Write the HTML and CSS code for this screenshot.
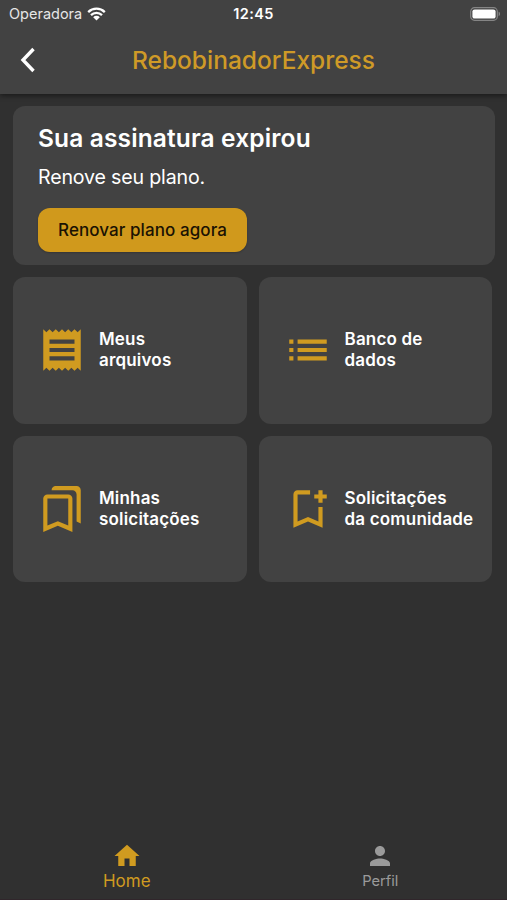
FILE: index.html
```html
<!DOCTYPE html>
<html lang="pt-BR">

<head>
  <meta charset="UTF-8">
  <meta name="viewport" content="width=device-width, initial-scale=1.0">
  <title>RebobinadorExpress</title>
  <link rel="stylesheet" href="styles.css">
</head>

<body>

  <header class="app-header">
    <!-- Phone status bar -->
    <div class="status-bar">
      <div class="carrier">
        <span>Operadora</span>
        <svg class="wifi" viewBox="0 0 19 14">
          <path d="M1.2 5.1a11.8 11.8 0 0 1 16.6 0M4 8.1a7.8 7.8 0 0 1 11 0" fill="none" stroke="currentColor" stroke-width="2.3" />
          <path d="M9.5 13.6 6.2 10.2a4.7 4.7 0 0 1 6.6 0z" fill="currentColor" />
        </svg>
      </div>
      <span class="clock">12:45</span>
      <svg class="battery" viewBox="0 0 31 14">
        <rect x="0.7" y="0.7" width="26.6" height="12.6" rx="3.8" fill="none" stroke="#858585" stroke-width="1.2" />
        <rect x="2.4" y="2.4" width="23.2" height="9.2" rx="2.2" fill="#fff" />
        <path d="M28.6 4.8c1.9.6 1.9 3.8 0 4.4z" fill="#858585" />
      </svg>
    </div>

    <!-- Navigation bar -->
    <div class="nav-bar">
      <button class="back-btn" aria-label="Voltar">
        <svg viewBox="0 0 16 26">
          <path d="M13.5 2 3 13l10.500 11" fill="none" stroke="currentColor" stroke-width="3.4" />
        </svg>
      </button>
      <h1>RebobinadorExpress</h1>
    </div>
  </header>

  <main>
    <section class="card plan-card">
      <h2>Sua assinatura expirou</h2>
      <p>Renove seu plano.</p>
      <button class="renew-btn">Renovar plano agora</button>
    </section>

    <!-- Menu tiles -->
    <div class="tiles">
      <a class="card tile">
        <svg viewBox="0 0 24 24"><path d="M18 17H6v-2h12v2zm0-4H6v-2h12v2zm0-4H6V7h12v2zM3 22l1.500-1.500L6 22l1.500-1.500L9 22l1.500-1.500L12 22l1.500-1.500L15 22l1.500-1.500L18 22l1.500-1.500L21 22V2l-1.500 1.500L18 2l-1.500 1.500L15 2l-1.500 1.500L12 2l-1.500 1.500L9 2 7.500 3.500 6 2 4.500 3.500 3 2v20z" /></svg>
        <span>Meus<br>arquivos</span>
      </a>
      <a class="card tile">
        <svg viewBox="0 0 24 24"><path d="M3 13h2v-2H3v2zm0 4h2v-2H3v2zm0-8h2V7H3v2zm4 4h14v-2H7v2zm0 4h14v-2H7v2zM7 7v2h14V7H7z" /></svg>
        <span>Banco de<br>dados</span>
      </a>
      <a class="card tile">
        <svg viewBox="0 0 24 24"><path d="M15 7v12.970l-5-2.150-5 2.150V7h10m4-6H8.990C7.890 1 7 1.900 7 3h10c1.100 0 2 .9 2 2v13l2 1V3c0-1.100-.9-2-2-2zm-4 4H5c-1.100 0-2 .9-2 2v16l7-3 7 3V7c0-1.100-.9-2-2-2z" /></svg>
        <span>Minhas<br>solicitações</span>
      </a>
      <a class="card tile">
        <svg viewBox="0 0 24 24"><path d="M17 11v6.970l-5-2.140-5 2.140V5h6V3H7c-1.100 0-2 .9-2 2v16l7-3 7 3V11h-2zm4-4h-2v2h-2V7h-2V5h2V3h2v2h2v2z" /></svg>
        <span>Solicitações<br>da comunidade</span>
      </a>
    </div>
  </main>

  <!-- Bottom tabs -->
  <nav class="tab-bar">
    <a class="tab active">
      <svg viewBox="0 0 24 24"><path d="M10 20v-6h4v6h5v-8h3L12 3 2 12h3v8z" /></svg>
      <span>Home</span>
    </a>
    <a class="tab">
      <svg viewBox="0 0 24 24"><path d="M12 12c2.210 0 4-1.790 4-4s-1.790-4-4-4-4 1.790-4 4 1.790 4 4 4zm0 2c-2.670 0-8 1.340-8 4v2h16v-2c0-2.660-5.330-4-8-4z" /></svg>
      <span>Perfil</span>
    </a>
  </nav>

</body>

</html>
```

FILE: styles.css
```css
* {
  margin: 0;
  padding: 0;
  box-sizing: border-box;
}

body {
  display: flex;
  flex-direction: column;
  height: 100vh;
  overflow: hidden;
  font-family: Inter, Roboto, sans-serif;
  background-color: #303030;
  color: #fff;
}

button {
  border: none;
  font-family: inherit;
}

/* Header */
.app-header {
  height: 94px;
  background-color: #424242;
  box-shadow: 0 2px 5px rgba(0, 0, 0, 0.45);
}

.status-bar {
  display: grid;
  grid-template-columns: 1fr auto 1fr;
  align-items: center;
  height: 27px;
  padding: 0 6px 0 9px;
}

.carrier {
  display: flex;
  align-items: center;
  gap: 5px;
  font-size: 14.5px;
  color: #e6e6e6;
}

.wifi {
  width: 19px;
  height: 14px;
  color: #fff;
}

.clock {
  margin-right: 3px;
  font-size: 14.5px;
  font-weight: 600;
  letter-spacing: 0.4px;
}

.battery {
  width: 31px;
  height: 14px;
  justify-self: end;
}

.nav-bar {
  display: grid;
  grid-template-columns: 56px 1fr 56px;
  align-items: center;
  height: 65px;
}

.back-btn {
  padding-left: 20px;
  background: none;
  color: #fff;
  text-align: left;
}

.back-btn svg {
  display: block;
  width: 16px;
  height: 26px;
}

.nav-bar h1 {
  font-size: 24.5px;
  font-weight: 500;
  color: #cf9a27;
  text-align: center;
}

/* Cards */
main {
  flex: 1;
  padding: 12px 12px 0 13px;
}

.card {
  background-color: #424242;
  border-radius: 12px;
}

.plan-card {
  height: 159px;
  padding: 16px 25px;
}

.plan-card h2 {
  font-size: 24.5px;
  font-weight: 600;
  line-height: 32px;
  letter-spacing: 0.14px;
}

.plan-card p {
  margin-top: 10px;
  font-size: 19.6px;
  line-height: 26px;
  letter-spacing: -0.17px;
}

.renew-btn {
  display: block;
  width: 209px;
  height: 44px;
  margin-top: 18px;
  border-radius: 12px;
  background-color: #d0991c;
  box-shadow: 0 1px 2px rgba(0, 0, 0, 0.2);
  color: #1a1203;
  font-size: 17px;
  font-weight: 500;
  letter-spacing: 0.08px;
}

/* Menu tiles */
.tiles {
  display: grid;
  grid-template-columns: 233.5px 233.5px;
  grid-auto-rows: 146.5px;
  gap: 12px;
  margin-top: 12px;
}

.tile {
  display: flex;
  align-items: center;
  gap: 12px;
  padding-left: 24px;
  font-size: 17px;
  font-weight: 600;
  line-height: 21px;
  letter-spacing: 0.18px;
  white-space: nowrap;
}

.tile svg {
  flex: none;
  width: 50px;
  height: 50px;
  fill: #d09b20;
}

/* Bottom tabs */
.tab-bar {
  display: grid;
  grid-template-columns: 1fr 1fr;
  height: 59px;
  border-bottom: 1px solid #30262b;
}

.tab {
  display: flex;
  flex-direction: column;
  align-items: center;
  color: #9a9a9a;
  font-size: 14.7px;
  line-height: 20px;
}

.tab svg {
  width: 30px;
  height: 30px;
  fill: currentColor;
}

.tab.active {
  color: #d09b20;
  font-size: 17px;
}
```
